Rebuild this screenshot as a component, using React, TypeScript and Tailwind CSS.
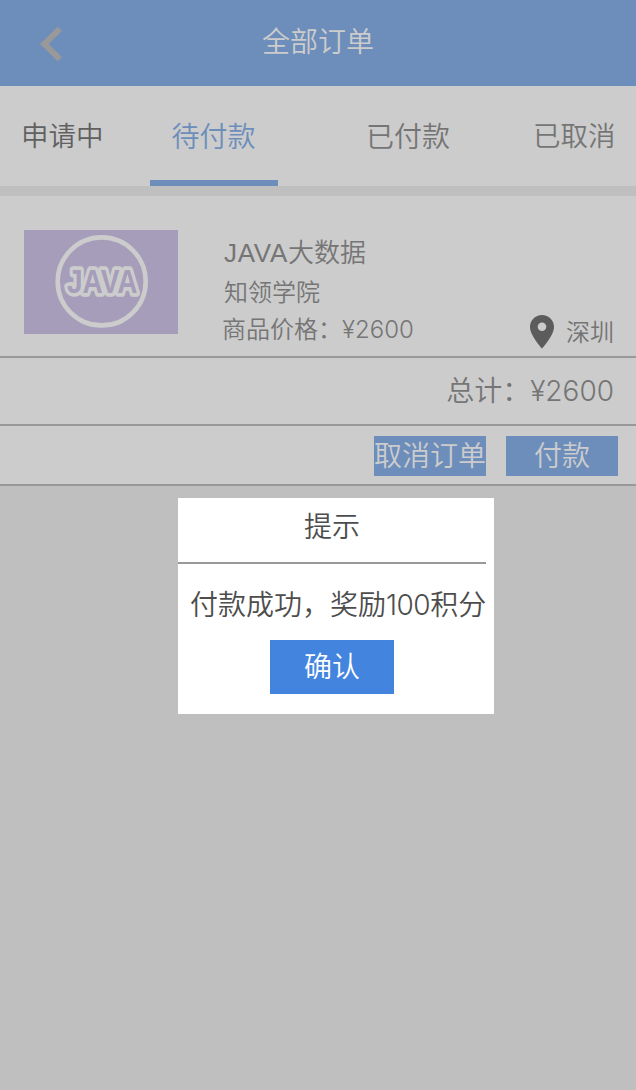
import type { ReactNode } from "react";

const cjk = "font-['Noto_Sans_CJK_SC',sans-serif]";

function Latin({ children, className = "" }: { children: ReactNode; className?: string }) {
  return <span className={`font-['Inter','Noto_Sans_CJK_SC',sans-serif] font-[350] ${className}`}>{children}</span>;
}

function Header() {
  return (
    <header className="grid h-[86px] grid-cols-[262px_1fr] bg-[#6d8ebb]">
      <svg className="mt-[26px] ml-10 h-9 w-6" viewBox="0 0 24 36" fill="none">
        <path d="M19.8 2.8 L4.2 18 L19.8 33.2" stroke="#999" strokeWidth="6" />
      </svg>
      <h1 className="mt-[20px] text-[28px] leading-[41px] text-[#ccc]">全部订单</h1>
    </header>
  );
}

function Tabs() {
  return (
    <nav className="flex h-[110px] border-b-10 border-[#bfbfbf] text-[28px] leading-10 text-[#757575]">
      <div className="w-[150px] pt-[28px] pl-[21px] text-[27.5px] text-[#606060]">申请中</div>
      <div className="w-32 border-b-6 border-[#6d8ebb] pt-[29px] pl-[21.5px] text-[#6d8ebb]">待付款</div>
      <div className="w-[255px] pt-[29px] pl-[88px]">已付款</div>
      <div className="pt-[28px] text-[27.5px]">已取消</div>
    </nav>
  );
}

function CourseCover() {
  return (
    <svg className="mt-[34px] h-[104px] w-[154px] shrink-0 bg-[#a59dba]" viewBox="0 0 154 104">
      <circle cx="77.7" cy="51.4" r="44" fill="none" stroke="#ccc" strokeWidth="4.6" />
      <text
        x="43"
        y="62.5"
        textLength="70.5"
        lengthAdjust="spacingAndGlyphs"
        className="fill-[#a59dba] stroke-[#ccc] font-['Liberation_Sans',sans-serif] text-[33px] font-bold [paint-order:stroke]"
        strokeWidth="7.5"
        strokeLinejoin="round"
      >
        JAVA
      </text>
    </svg>
  );
}

function PinIcon() {
  return (
    <svg className="h-[34px] w-6" viewBox="0 0 24 34">
      <path
        fillRule="evenodd"
        d="M12 0C5.3 0 0 5.2 0 11.9 0 20.5 12 33.5 12 33.5S24 20.5 24 11.9C24 5.2 18.7 0 12 0Zm0 16.1a4.3 4.3 0 1 1 0-8.6 4.3 4.3 0 0 1 0 8.6Z"
        fill="#5c5c5c"
      />
    </svg>
  );
}

function Order() {
  return (
    <section className="text-[#757575]">
      <div className="flex h-[162px] border-b-2 border-[#999] pl-6">
        <CourseCover />
        <div className="ml-11 flex-1 pt-[35px] text-2xl">
          <div className="pl-[2px] text-[26px] leading-[39px]">
            <span className="font-['Liberation_Sans',sans-serif] tracking-[0.7px]">JAVA</span>大数据
          </div>
          <div className="-mt-0.5 pl-[2px] leading-[39px]">知领学院</div>
          <div className="flex leading-9">
            <div className="w-[308px]">商品价格：<Latin>¥2600</Latin></div>
            <div className="pt-[5px]"><PinIcon /></div>
            <div className="pt-px pl-3 leading-10">深圳</div>
          </div>
        </div>
      </div>
      <div className="flex h-[68px] justify-end border-b-2 border-[#999] pt-[11px] pr-[22px] text-[28px] leading-10">
        <span>总计：<Latin>¥2600</Latin></span>
      </div>
      <div className="flex h-[60px] justify-end gap-5 border-b-2 border-[#999] pt-[10px] pr-[18px] text-[28px] text-[#ccc]">
        <button className="h-10 w-28 bg-[#6d8ebb] pb-[3px] text-center leading-[37px]">取消订单</button>
        <button className="h-10 w-28 bg-[#6d8ebb] pb-[3px] text-center leading-[37px]">付款</button>
      </div>
    </section>
  );
}

function Dialog() {
  return (
    <div role="dialog" className="absolute top-[498px] left-[178px] h-[216px] w-[316px] bg-white text-[28px] text-[#4d4d4d]">
      <h2 className="h-[66px] w-[308px] border-b-2 border-[#999] pt-[7px] text-center leading-10">提示</h2>
      <p className="mt-[19px] pl-3 leading-10 whitespace-nowrap">付款成功，奖励<Latin className="tracking-[-0.5px]">100</Latin>积分</p>
      <button className="mt-[15px] ml-[92px] block h-[54px] w-31 bg-[#4384df] pb-[5px] text-center text-white">确认</button>
    </div>
  );
}

export default function App() {
  return (
    <div className={`relative h-[1090px] w-[636px] overflow-hidden bg-[#bfbfbf] font-[350] ${cjk}`}>
      <main className="bg-[#ccc]">
        <Header />
        <Tabs />
        <Order />
      </main>
      <Dialog />
    </div>
  );
}
